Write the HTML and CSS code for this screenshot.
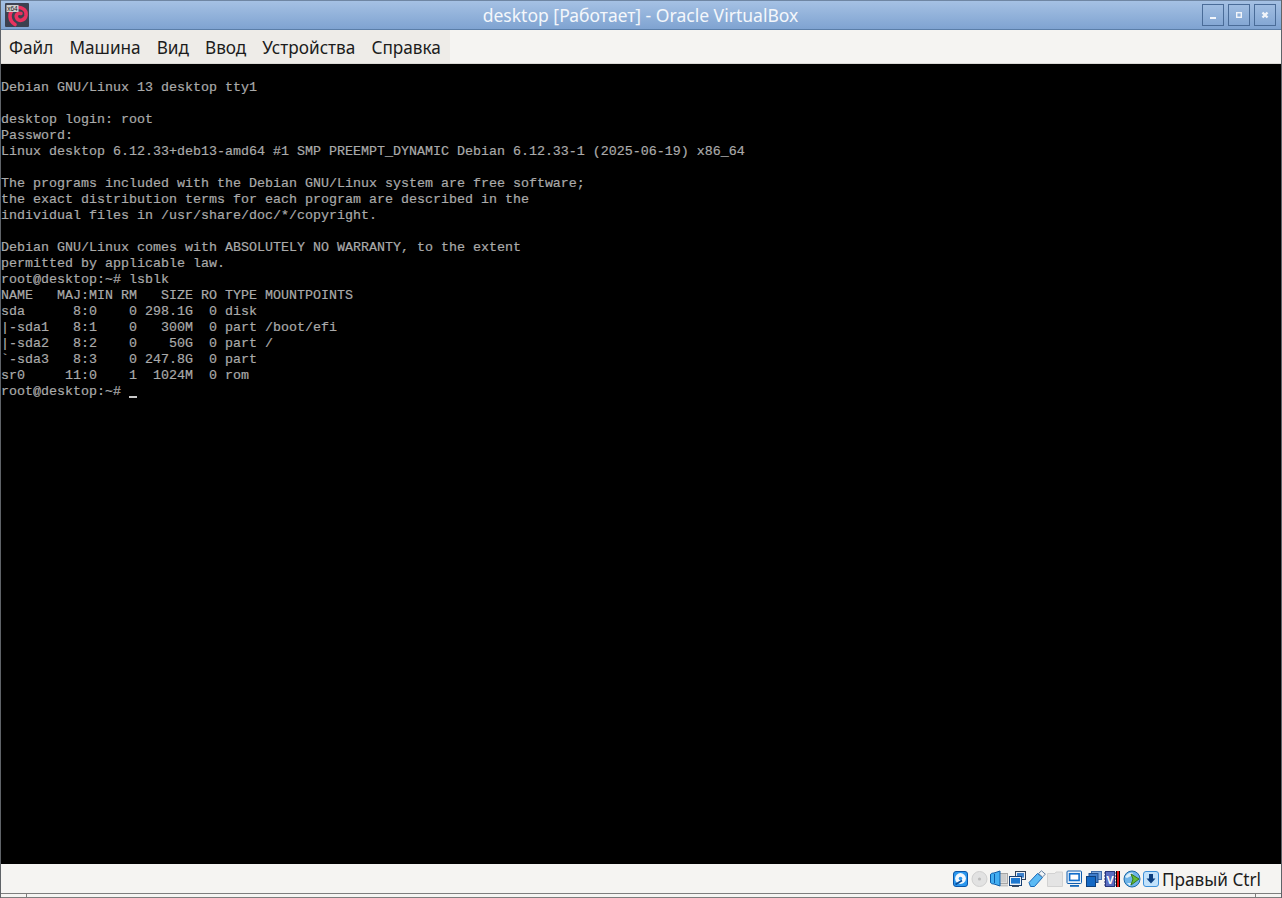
FILE: index.html
```html
<!DOCTYPE html>
<html lang="ru">
<head>
<meta charset="utf-8">
<title>desktop [Работает] - Oracle VirtualBox</title>
<link rel="stylesheet" href="styles.css">
</head>
<body>
<div class="window">
  <header class="titlebar">
    <div class="app-icon">
      <svg width="24" height="24" viewBox="0 0 24 24">
        <rect width="24" height="24" rx="1" fill="#3c4150"/>
        <path d="M10 21.5 C4 18 3 10 9 6 C15 2.5 22 6 21 12.5 C20 18 13 19 11.5 14.5 C10.5 11.5 13 9.5 16 10.5" fill="none" stroke="#e9325f" stroke-width="3.6" stroke-linecap="round"/>
        <rect x="1.5" y="2" width="12" height="7" fill="#cfcfcf"/>
        <text x="2.2" y="8" class="badge-text">x64</text>
      </svg>
    </div>
    <div class="title">desktop [Работает] - Oracle VirtualBox</div>
    <div class="wm-buttons">
      <div class="wm-btn"><svg width="20" height="20" viewBox="0 0 20 20"><rect x="7" y="12" width="6" height="2" fill="#f2f5fa"/></svg></div>
      <div class="wm-btn"><svg width="20" height="20" viewBox="0 0 20 20"><rect x="7.7" y="7.7" width="4.6" height="4.6" fill="none" stroke="#f2f5fa" stroke-width="1.4"/></svg></div>
      <div class="wm-btn"><svg width="20" height="20" viewBox="0 0 20 20"><path d="M7.5 7.5 L12.5 12.5 M12.5 7.5 L7.5 12.5" stroke="#f2f5fa" stroke-width="2.4"/></svg></div>
    </div>
  </header>
  <nav class="menubar">
    <ul class="menu">
      <li class="menu-item">Файл</li>
      <li class="menu-item">Машина</li>
      <li class="menu-item">Вид</li>
      <li class="menu-item">Ввод</li>
      <li class="menu-item">Устройства</li>
      <li class="menu-item">Справка</li>
    </ul>
  </nav>
  <main class="screen">
<pre class="console">
Debian GNU/Linux 13 desktop tty1

desktop login: root
Password:
Linux desktop 6.12.33+deb13-amd64 #1 SMP PREEMPT_DYNAMIC Debian 6.12.33-1 (2025-06-19) x86_64

The programs included with the Debian GNU/Linux system are free software;
the exact distribution terms for each program are described in the
individual files in /usr/share/doc/*/copyright.

Debian GNU/Linux comes with ABSOLUTELY NO WARRANTY, to the extent
permitted by applicable law.
root@desktop:~# lsblk
NAME   MAJ:MIN RM   SIZE RO TYPE MOUNTPOINTS
sda      8:0    0 298.1G  0 disk
|-sda1   8:1    0   300M  0 part /boot/efi
|-sda2   8:2    0    50G  0 part /
`-sda3   8:3    0 247.8G  0 part
sr0     11:0    1  1024M  0 rom
root@desktop:~# <span class="cursor"></span></pre>
  </main>
  <footer class="statusbar">
    <div class="tray">
      <svg class="ico" viewBox="0 0 18 18"><rect x="1.5" y="1.5" width="14" height="15" rx="2.5" fill="#2b97ee" stroke="#0a55a8"/><circle cx="8.5" cy="8.5" r="5.4" fill="#f2f8fe"/><circle cx="8.5" cy="8.5" r="1.8" fill="#2b97ee"/><path d="M3.5 14.5 L10 10.5" stroke="#0a4c98" stroke-width="1.8"/></svg>
      <svg class="ico" viewBox="0 0 18 18"><circle cx="8.5" cy="9" r="7.5" fill="#e2e2e2" stroke="#cfcfcf"/><circle cx="8.5" cy="9" r="1.6" fill="#bbbbbb"/></svg>
      <svg class="ico" viewBox="0 0 18 18"><rect x="9.5" y="3.5" width="8" height="10" fill="#dcdcdc" stroke="#a6a6a6"/><path d="M11 5 H16 M11 7 H16 M11 9 H16 M11 11 H16" stroke="#bcbcbc"/><rect x="10" y="14.5" width="8" height="2" fill="#c6c6c6"/><path d="M.5 5 C.5 3.5 2 3 4 3 L10 1 V16 L4 14 C2 14 .5 13.5 .5 12 Z" fill="#42aef2" stroke="#0d5ca8"/><path d="M4.5 4 V13" stroke="#0d5ca8"/></svg>
      <svg class="ico" viewBox="0 0 18 18"><rect x="6.5" y="1.5" width="10" height="8" fill="#e9eef5" stroke="#2f3f55"/><rect x="8" y="3" width="7" height="4.6" fill="#3b80cc"/><rect x=".5" y="6.5" width="12" height="9" fill="#eef2f7" stroke="#163f74"/><rect x="2" y="8" width="9" height="5.6" fill="#1e78d0"/><rect x="3" y="15.6" width="7" height="1.4" fill="#3a4a60"/></svg>
      <svg class="ico" viewBox="0 0 18 18"><path d="M1 12.5 L9.5 3.5 L14.5 7.5 L6.5 16.5 L2.5 16.5 Z" fill="#5cbaf4" stroke="#1668b8"/><path d="M10.5 3.5 L13.5 .8 L17.4 4.2 L14.5 7 Z" fill="#f2f5f8" stroke="#5f7d9e"/></svg>
      <svg class="ico" viewBox="0 0 18 18"><path d="M.5 3.5 H8 L9 2 H15.5 V16.5 H.5 Z" fill="#e4e4e4" stroke="#d2d2d2"/></svg>
      <svg class="ico" viewBox="0 0 18 18"><rect x="1" y="1" width="14.5" height="12.5" rx="1" fill="#e6f0fa" stroke="#0f5cad"/><rect x="3.6" y="3.8" width="9.5" height="6.6" fill="#fff" stroke="#0f6dcb" stroke-width="1.6"/><rect x="4" y="15" width="9" height="1.8" fill="#1668b8"/></svg>
      <svg class="ico" viewBox="0 0 18 18"><rect x="6.5" y="1.5" width="10" height="8" fill="#7fa8de" stroke="#3f6dac"/><rect x="4" y="3.5" width="9" height="9" fill="#3f7ccb" stroke="#1e4f90"/><rect x="1.5" y="6.5" width="9" height="10" fill="#1468c4" stroke="#0e3f7c"/></svg>
      <div class="vt">
        <svg class="vt-ico" viewBox="0 0 12 18"><path d="M1 3 H0 M1 6 H0 M1 9 H0 M1 12 H0 M1 15 H0 M11 3 H12 M11 6 H12 M11 9 H12 M11 12 H12 M11 15 H12" stroke="#27367c"/><rect x="1.5" y="1.5" width="9" height="15" fill="#5a6cc0" stroke="#27367c"/><text x="2.4" y="13.5" class="v-text">V</text></svg>
        <span class="cpu-bar"></span>
      </div>
      <svg class="ico" viewBox="0 0 18 18"><circle cx="9" cy="9" r="8" fill="#6fb4e8" stroke="#1d6aa8"/><path d="M2 7 C4 3 8 2 10 3 L8 6 L4 8 Z M4 13 L8 13 L7 16 Z" fill="#dcefFb"/><path d="M8 4 L16 9 L8 15 L10 9 Z" fill="#64bb38" stroke="#367a16"/></svg>
      <svg class="ico" viewBox="0 0 18 18"><rect x="1.5" y="1.5" width="15" height="15" rx="2.5" fill="#c2e2fb" stroke="#3d8fd8"/><path d="M7 4 H11 V8.5 H13.5 L9 13.5 L4.5 8.5 H7 Z" fill="#0d3f80"/></svg>
    </div>
    <span class="host-key">Правый Ctrl</span>
  </footer>
  <div class="bottom-edge"><span class="grip"></span><span class="grip"></span></div>
</div>
</body>
</html>
```
FILE: styles.css
```css
* { box-sizing: border-box; }
html, body { margin: 0; padding: 0; height: 100%; overflow: hidden; background: #f5f4f2; }
.window {
  width: 1282px;
  height: 898px;
  display: flex;
  flex-direction: column;
  border-left: 1px solid #5f6368;
  border-right: 1px solid #5f6368;
}
.titlebar {
  height: 30px;
  flex: none;
  display: grid;
  grid-template-columns: 1fr auto 1fr;
  align-items: center;
  border-top: 1px solid #6f86a3;
  border-bottom: 1px solid #5b7ea8;
  background: linear-gradient(#a5c1e4, #7fa3d1);
  padding: 0 5px 0 4px;
}
.app-icon { width: 24px; height: 24px; }
.badge-text { font: 6.5px "Liberation Sans", sans-serif; fill: #222; }
.title {
  font: 17.55px/28px "Noto Sans", sans-serif;
  color: #f4f7fb;
}
.wm-buttons { display: flex; gap: 4px; justify-self: end; }
.wm-btn {
  width: 22px;
  height: 22px;
  border: 1px solid #4a6c98;
  display: flex;
  align-items: center;
  justify-content: center;
}
.menubar {
  height: 34px;
  flex: none;
  background: #f5f4f2;
  border-bottom: 1px solid #dcdad6;
}
.menu {
  list-style: none;
  margin: 0;
  padding: 0;
  display: flex;
  width: 449px;
  height: 33px;
  background: #eeece8;
}
.menu-item {
  font: 17.2px/36px "Noto Sans", sans-serif;
  color: #1c1c1c;
  padding: 0 8px;
}
.screen { height: 800px; flex: none; background: #000; overflow: hidden; }
.console {
  margin: 0;
  padding: 16px 0 0;
  font: 13.33px/16px "Liberation Mono", monospace;
  color: #aaaaaa;
  -webkit-text-stroke: 0.2px #aaaaaa;
}
.cursor {
  display: inline-block;
  width: 8px;
  height: 2px;
  background: #c8c8c8;
  vertical-align: -3px;
}
.statusbar {
  height: 29px;
  flex: none;
  display: flex;
  align-items: center;
  justify-content: flex-end;
  background: #f5f4f2;
  padding: 1px 20px 0 0;
}
.tray { display: flex; align-items: center; gap: 1px; }
.ico { width: 18px; height: 18px; display: block; flex: none; }
.vt { display: flex; align-items: center; width: 18px; }
.vt-ico { width: 12px; height: 18px; display: block; flex: none; }
.cpu-bar { width: 4px; height: 16px; background: #e01010; border-left: 1px solid #000; border-right: 1px solid #000; }
.v-text { font: bold 11px "Liberation Sans", sans-serif; fill: #fff; }
.host-key {
  font: 17.2px/26px "Noto Sans", sans-serif;
  color: #1c1c1c;
  margin: 2px 0 0 2px;
}
.bottom-edge {
  flex: 1;
  display: flex;
  justify-content: space-between;
  padding: 0 25px;
  background: #f5f4f2;
  border-top: 1px solid #7d7d7d;
  border-bottom: 1px solid #7d7d7d;
}
.grip { width: 1px; background: #7d7d7d; }
```
